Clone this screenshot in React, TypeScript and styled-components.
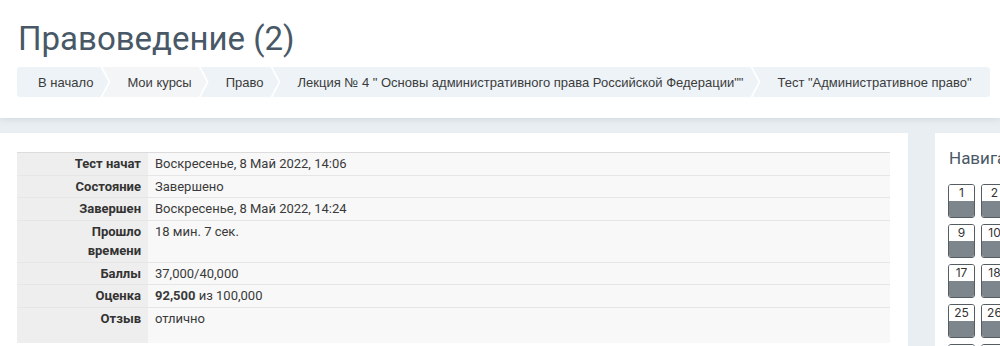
import React from 'react';
import styled, { createGlobalStyle } from 'styled-components';

const GlobalStyle = createGlobalStyle`
  html, body {
    margin: 0;
    padding: 0;
    background: #e9eef2;
    overflow: hidden;
  }
  body {
    font-family: Roboto, "Liberation Sans", Arial, sans-serif;
    color: #333;
  }
`;

const Page = styled.div`
  width: 1000px;
  height: 346px;
  overflow: hidden;
`;

const Header = styled.header`
  background: #fff;
  height: 118px;
  box-sizing: border-box;
  padding: 16px 10px 0 17px;
  box-shadow: 0 2px 6px rgba(60, 90, 110, 0.12);
`;

const Title = styled.h1`
  margin: 0 0 0 1px;
  font-family: Roboto, "Liberation Sans", sans-serif;
  font-weight: 400;
  font-size: 33px;
  line-height: 46px;
  color: #485866;
`;

const Crumbs = styled.nav`
  display: flex;
  margin-top: 5px;
  height: 30px;
  width: 973px;
`;

const Crumb = styled.div<{ $first?: boolean; $muted?: boolean }>`
  display: flex;
  align-items: center;
  height: 30px;
  box-sizing: border-box;
  padding: 0 15px 0 ${p => (p.$first ? '21px' : '25px')};
  margin-left: ${p => (p.$first ? '0' : '-6px')};
  background: ${p => (p.$muted ? '#f4f5f6' : '#edf3f7')};
  font-family: "Liberation Sans", Arial, sans-serif;
  font-size: 13px;
  color: #3b3b3b;
  white-space: nowrap;
  border-radius: ${p => (p.$first ? '3px 0 0 3px' : '0')};
  clip-path: ${p =>
    p.$first
      ? 'polygon(0 0, calc(100% - 8px) 0, 100% 50%, calc(100% - 8px) 100%, 0 100%)'
      : 'polygon(0 0, calc(100% - 8px) 0, 100% 50%, calc(100% - 8px) 100%, 0 100%, 8px 50%)'};
`;

const LastCrumb = styled(Crumb)`
  flex: 1;
  clip-path: polygon(0 0, 100% 0, 100% 100%, 0 100%, 8px 50%);
  border-radius: 0 3px 3px 0;
`;

const Body = styled.div`
  display: flex;
  gap: 27px;
  margin-top: 15px;
  align-items: flex-start;
`;

const MainCard = styled.section`
  width: 908px;
  flex-shrink: 0;
  background: #fff;
  box-sizing: border-box;
  padding: 19px 18px 19px 17px;
  min-height: 260px;
`;

const Table = styled.table`
  width: 873px;
  border-collapse: collapse;
  font-size: 13px;
  line-height: 19.5px;
  border-top: 1px solid #dcdcdc;
`;

const Row = styled.tr`
  border-bottom: 1px solid #e6e6e6;
  &:last-child {
    border-bottom: none;
  }
`;

const Label = styled.th`
  width: 131px;
  box-sizing: border-box;
  background: #eeeeee;
  text-align: right;
  font-weight: 700;
  padding: 1px 7px 1px 4px;
  vertical-align: top;
  color: #333;
`;

const LabelText = styled.span`
  display: inline-block;
  max-width: 80px;
`;

const Value = styled.td<{ $tall?: boolean }>`
  background: #f8f8f8;
  padding: 1px 7px ${p => (p.$tall ? '15px' : '1px')} 7px;
  vertical-align: top;
  color: #3a3a3a;
`;

const Strong = styled.b`
  font-weight: 700;
`;

const Sidebar = styled.aside`
  width: 260px;
  flex-shrink: 0;
  background: #fff;
  box-sizing: border-box;
  padding: 14px 13px;
  min-height: 260px;
`;

const SideTitle = styled.h2`
  margin: 0 0 15px 1px;
  font-family: Roboto, "Liberation Sans", sans-serif;
  font-weight: 400;
  font-size: 17px;
  line-height: 22px;
  color: #485866;
  white-space: nowrap;
`;

const NavGrid = styled.div`
  display: grid;
  grid-template-columns: repeat(8, 27px);
  column-gap: 6px;
  row-gap: 6px;
`;

const NavButton = styled.div`
  width: 27px;
  height: 34px;
  box-sizing: border-box;
  border: 1px solid #555c62;
  border-radius: 3px;
  overflow: hidden;
  display: flex;
  flex-direction: column;
`;

const NavNum = styled.span`
  height: 16px;
  background: #fff;
  font-family: Inter, Roboto, sans-serif;
  font-size: 12px;
  line-height: 16px;
  text-align: center;
  color: #333;
`;

const NavFill = styled.span`
  flex: 1;
  background: #7e868d;
`;

const rows: { label: string; value: React.ReactNode; tall?: boolean }[] = [
  { label: 'Тест начат', value: 'Воскресенье, 8 Май 2022, 14:06' },
  { label: 'Состояние', value: 'Завершено' },
  { label: 'Завершен', value: 'Воскресенье, 8 Май 2022, 14:24' },
  { label: 'Прошло времени', value: '18 мин. 7 сек.' },
  { label: 'Баллы', value: '37,000/40,000' },
  { label: 'Оценка', value: <><Strong>92,500</Strong> из 100,000</> },
  { label: 'Отзыв', value: 'отлично', tall: true },
];

export default function App() {
  const questions = Array.from({ length: 40 }, (_, i) => i + 1);
  return (
    <Page>
      <GlobalStyle />
      <Header>
        <Title>Правоведение (2)</Title>
        <Crumbs>
          <Crumb $first>В начало</Crumb>
          <Crumb $muted>Мои курсы</Crumb>
          <Crumb>Право</Crumb>
          <Crumb>Лекция № 4 " Основы административного права Российской Федерации""</Crumb>
          <LastCrumb>Тест "Административное право"</LastCrumb>
        </Crumbs>
      </Header>
      <Body>
        <MainCard>
          <Table>
            <tbody>
              {rows.map((r, i) => (
                <Row key={i}>
                  <Label><LabelText>{r.label}</LabelText></Label>
                  <Value $tall={r.tall}>{r.value}</Value>
                </Row>
              ))}
            </tbody>
          </Table>
        </MainCard>
        <Sidebar>
          <SideTitle>Навигация по тесту</SideTitle>
          <NavGrid>
            {questions.map(n => (
              <NavButton key={n}>
                <NavNum>{n}</NavNum>
                <NavFill />
              </NavButton>
            ))}
          </NavGrid>
        </Sidebar>
      </Body>
    </Page>
  );
}
